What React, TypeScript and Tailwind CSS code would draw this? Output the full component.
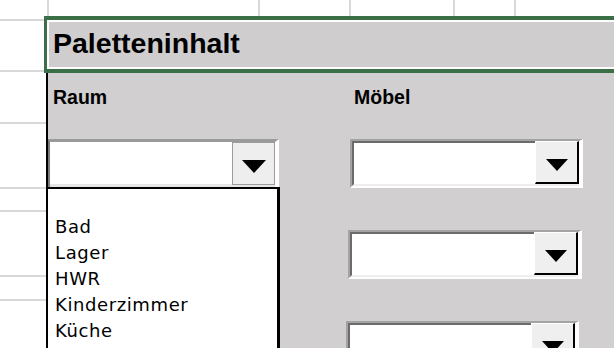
const grid = "border-[#d9d9d9]";

// kleines schwarzes Dreieck für die Dropdown-Buttons
function Arrow({ w, h }: { w: number; h: number }) {
  return (
    <svg width={w} height={h} viewBox={`0 0 ${w} ${h}`} className="block">
      <polygon points={`0,0 ${w},0 ${w / 2},${h}`} fill="#000" />
    </svg>
  );
}

// Windows-artige Combobox (rechte Spalte)
function WinCombo({ className = "" }: { className?: string }) {
  return (
    <div
      className={`flex h-[49px] w-[233px] shrink-0 bg-[#eeeeee] border-t-2 border-l-2 border-b-2 border-r-4 border-t-[#a3a3a3] border-l-[#a3a3a3] border-b-white border-r-white ${className}`}
    >
      <div className="flex-1 bg-white border-t-2 border-l-2 border-b-2 border-t-[#6b6b6b] border-l-[#6b6b6b] border-b-[#eeeeee]" />
      <div className="flex w-[44px] mb-[2px] justify-center items-start pt-[17px] bg-[#efefef] border-t border-l border-t-white border-l-white border-r-2 border-b-2 border-r-black border-b-black">
        <Arrow w={22} h={12} />
      </div>
    </div>
  );
}

// Mac-artige Combobox (linke Spalte, aufgeklappt)
function MacCombo() {
  return (
    <div className="flex h-[48px] w-[231px] shrink-0 bg-[#e6e6e6] border-t-[3px] border-l-2 border-r-4 border-t-[#9a9a9a] border-l-[#7a7a7a] border-r-white">
      <div className="flex-1 bg-white mb-[3px]" />
      <div className="flex w-[43px] mb-[2px] justify-center items-start pt-[17px] bg-[#eeeeee] border border-[#9c9c9c]">
        <Arrow w={24} h={13} />
      </div>
    </div>
  );
}

const raeume = ["Bad", "Lager", "HWR", "Kinderzimmer", "Küche"];

export default function App() {
  return (
    <div className="w-[614px] h-[348px] overflow-hidden bg-white flex flex-col font-['Liberation_Sans',Arial,sans-serif]">
      {/* Tabellenzeile oben */}
      <div className="flex h-[16px] shrink-0">
        <div className={`w-[49px] border-r-2 ${grid}`} />
        <div className={`w-[211px] border-r-2 ${grid}`} />
        <div className={`w-[91px] border-r-2 ${grid}`} />
        <div className={`w-[104px] border-r-2 ${grid}`} />
        <div className={`w-[61px] border-r-2 ${grid}`} />
        <div className="flex-1" />
      </div>

      {/* Titelzeile */}
      <div className="flex h-[57px] shrink-0">
        <div className="w-[44px] shrink-0 flex flex-col">
          <div className="h-[3px]" />
          <div className={`h-[53px] border-t-2 border-b-2 ${grid}`} />
        </div>
        <div className="flex-1 border-t-4 border-b-4 border-l-[3px] border-[#3b6f47]">
          <div className="h-full bg-[#cfcdce] border-t-2 border-b-2 border-l-2 border-white pl-[4px] pt-[7px]">
            <h1 className="text-[28.5px] leading-none font-bold text-black">Paletteninhalt</h1>
          </div>
        </div>
      </div>

      {/* Inhalt */}
      <div className="flex flex-1 min-h-0">
        <div className="w-[46px] shrink-0 flex flex-col">
          <div className="h-[49px]" />
          <div className={`h-[65px] border-t-2 ${grid}`} />
          <div className={`h-[23px] border-t-2 ${grid}`} />
          <div className={`h-[65px] border-t-2 ${grid}`} />
          <div className={`h-[24px] border-t-2 ${grid}`} />
          <div className={`flex-1 border-t-2 ${grid}`} />
        </div>

        <div className="flex-1 flex bg-[#d1cfd0] border-l-2 border-black overflow-hidden">
          {/* Raum */}
          <div className="w-[232px] shrink-0 flex flex-col">
            <div className="pt-[15px] pl-[5px] text-[19.5px] leading-none font-bold text-black">Raum</div>
            <div className="mt-[31px]">
              <MacCombo />
            </div>
            <ul className="flex-1 bg-white border-t-2 border-r-[3px] border-black pt-[25px] pl-[7px] font-['DejaVu_Sans',sans-serif] text-[18px] leading-[26px] tracking-[0.6px] text-black">
              {raeume.map((r) => (
                <li key={r}>{r}</li>
              ))}
            </ul>
          </div>

          {/* Möbel */}
          <div className="ml-[66px] flex flex-col">
            <div className="pt-[15px] pl-[8px] text-[19.5px] leading-none font-bold text-black">Möbel</div>
            <WinCombo className="mt-[31px] ml-[4px]" />
            <WinCombo className="mt-[42px] ml-[2px] h-[48px] w-[234px]" />
            <WinCombo className="mt-[42px]" />
          </div>
        </div>
      </div>
    </div>
  );
}
